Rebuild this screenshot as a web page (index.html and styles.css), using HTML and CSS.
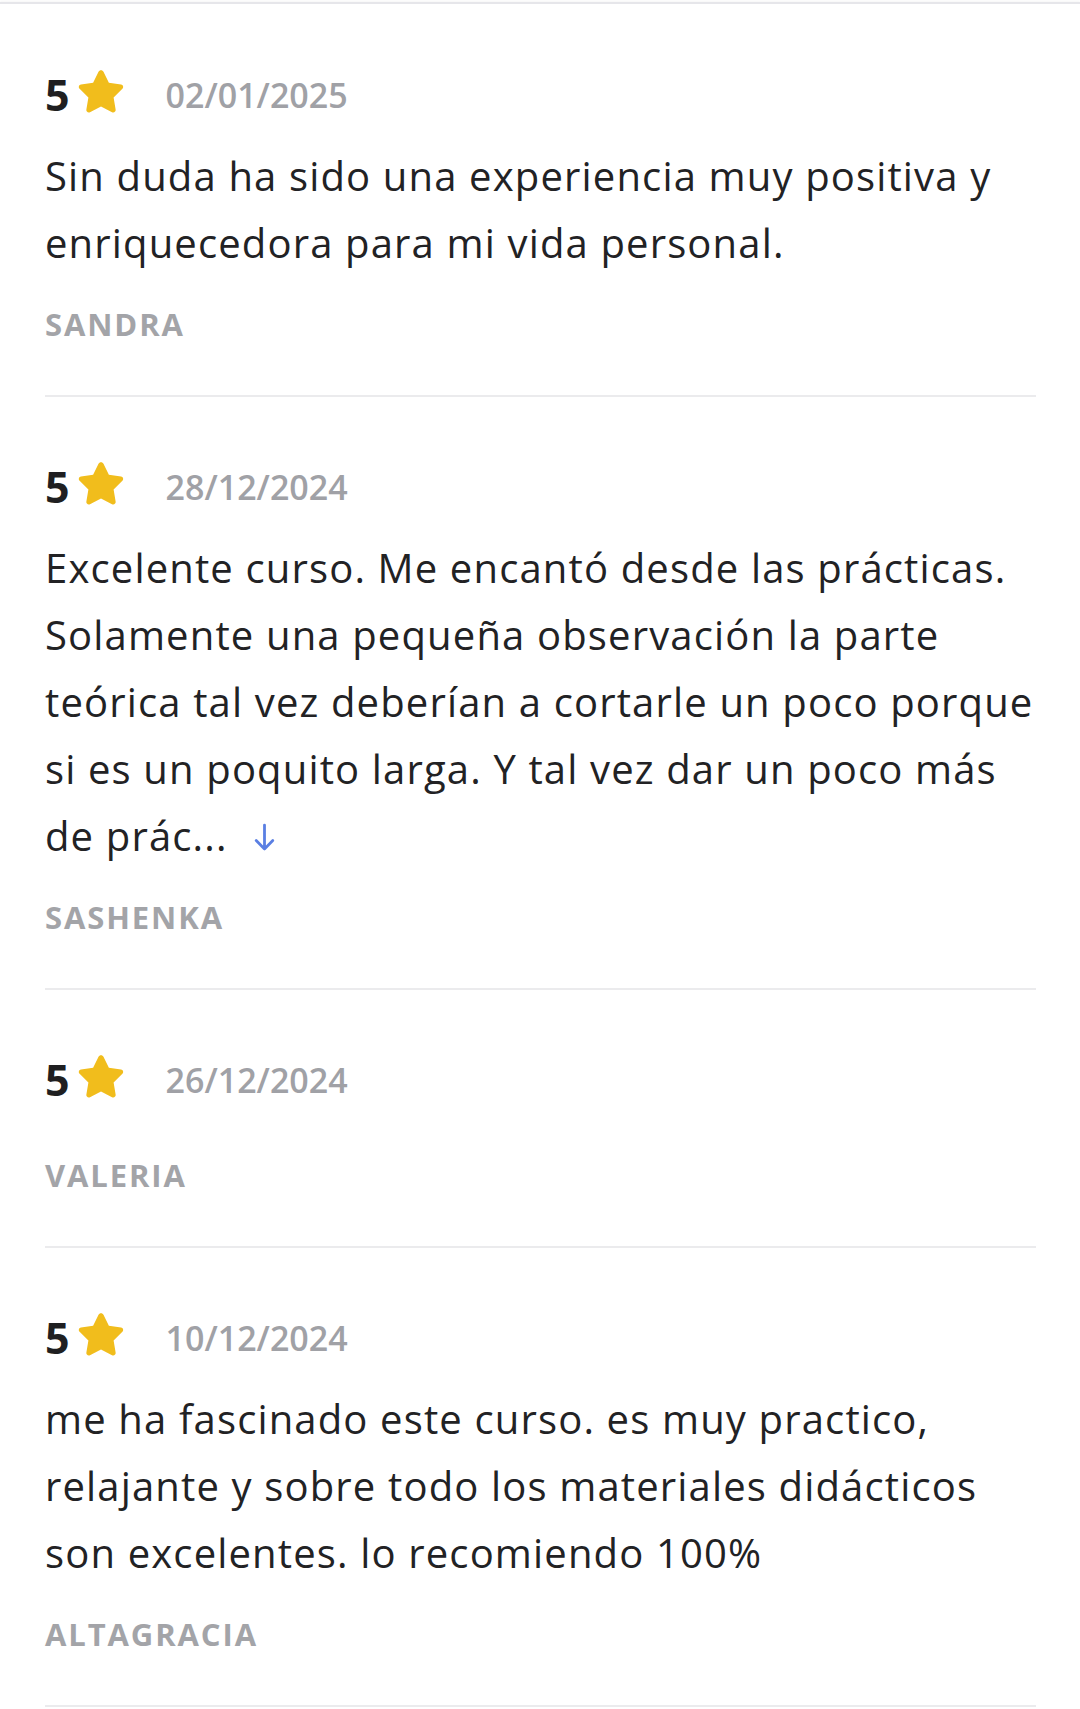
FILE: index.html
```html
<!DOCTYPE html>
<html lang="es">
<head>
<meta charset="utf-8">
<title>Opiniones</title>
<link rel="stylesheet" href="styles.css">
</head>
<body>
<div class="reviews">
  <div class="review">
    <div class="rating">
      <span class="score">5</span>
      <svg class="star" viewBox="0 0 24 24"><path d="M12 2.3c.5 0 .9.3 1.1.7l2.4 4.9 5.4.8c.9.1 1.3 1.2.6 1.9l-3.9 3.8.9 5.4c.2.9-.8 1.6-1.6 1.2L12 18.4 7.1 21c-.8.4-1.8-.3-1.6-1.2l.9-5.4-3.9-3.8c-.7-.7-.3-1.8.6-1.9l5.4-.8L10.9 3c.2-.4.6-.7 1.1-.7z"/></svg>
      <span class="date">02/01/2025</span>
    </div>
    <p class="text">Sin duda ha sido una experiencia muy positiva y enriquecedora para mi vida personal.</p>
    <div class="name">SANDRA</div>
  </div>
  <div class="review">
    <div class="rating">
      <span class="score">5</span>
      <svg class="star" viewBox="0 0 24 24"><path d="M12 2.3c.5 0 .9.3 1.1.7l2.4 4.9 5.4.8c.9.1 1.3 1.2.6 1.9l-3.9 3.8.9 5.4c.2.9-.8 1.6-1.6 1.2L12 18.4 7.1 21c-.8.4-1.8-.3-1.6-1.2l.9-5.4-3.9-3.8c-.7-.7-.3-1.8.6-1.9l5.4-.8L10.9 3c.2-.4.6-.7 1.1-.7z"/></svg>
      <span class="date">28/12/2024</span>
    </div>
    <p class="text">Excelente curso. Me encantó desde las prácticas. Solamente una pequeña observación la parte teórica tal vez deberían a cortarle un poco porque si es un poquito larga. Y tal vez dar un poco más de prác...<svg class="more" viewBox="0 0 20 28"><path d="M10 2v23M2 17l8 8 8-8"/></svg></p>
    <div class="name">SASHENKA</div>
  </div>
  <div class="review">
    <div class="rating">
      <span class="score">5</span>
      <svg class="star" viewBox="0 0 24 24"><path d="M12 2.3c.5 0 .9.3 1.1.7l2.4 4.9 5.4.8c.9.1 1.3 1.2.6 1.9l-3.9 3.8.9 5.4c.2.9-.8 1.6-1.6 1.2L12 18.4 7.1 21c-.8.4-1.8-.3-1.6-1.2l.9-5.4-3.9-3.8c-.7-.7-.3-1.8.6-1.9l5.4-.8L10.9 3c.2-.4.6-.7 1.1-.7z"/></svg>
      <span class="date">26/12/2024</span>
    </div>
    <div class="name">VALERIA</div>
  </div>
  <div class="review">
    <div class="rating">
      <span class="score">5</span>
      <svg class="star" viewBox="0 0 24 24"><path d="M12 2.3c.5 0 .9.3 1.1.7l2.4 4.9 5.4.8c.9.1 1.3 1.2.6 1.9l-3.9 3.8.9 5.4c.2.9-.8 1.6-1.6 1.2L12 18.4 7.1 21c-.8.4-1.8-.3-1.6-1.2l.9-5.4-3.9-3.8c-.7-.7-.3-1.8.6-1.9l5.4-.8L10.9 3c.2-.4.6-.7 1.1-.7z"/></svg>
      <span class="date">10/12/2024</span>
    </div>
    <p class="text">me ha fascinado este curso. es muy practico, relajante y sobre todo los materiales didácticos son excelentes. lo recomiendo 100%</p>
    <div class="name">ALTAGRACIA</div>
  </div>
</div>
</body>
</html>
```

FILE: styles.css
```css
html, body {
  margin: 0;
  padding: 0;
  background: #ffffff;
}

body {
  font-family: "Open Sans", "Noto Sans", "Liberation Sans", sans-serif;
  color: #202124;
}

.reviews {
  margin-top: 2px;
  border-top: 2px solid #e6e6ea;
  box-shadow: 0 -1px 2px rgba(0, 0, 0, 0.04);
  padding: 0 44px 0 45px;
}

.review {
  display: flex;
  flex-direction: column;
  padding: 67px 0 51px;
  border-bottom: 2px solid #ebebed;
}

.review:nth-child(2), .review:nth-child(3), .review:nth-child(4) {
  padding-top: 66px;
}

.rating {
  display: flex;
  align-items: center;
  height: 48px;
  margin-bottom: 23px;
}

.score {
  font-size: 43px;
  font-weight: 700;
  color: #1f1f21;
  line-height: 48px;
}

.star {
  width: 54px;
  height: 54px;
  margin-left: 4px;
  margin-top: -6px;
  fill: #f1bd1c;
}

.date {
  margin-left: 38px;
  font-size: 34px;
  font-weight: 600;
  color: #a0a1a6;
  line-height: 48px;
}

.text {
  margin: 0 -14px 0 0;
  font-size: 40px;
  line-height: 67px;
  letter-spacing: 1.15px;
  color: #222224;
}

.more {
  width: 21px;
  height: 29px;
  margin-left: 26px;
  vertical-align: -1px;
  fill: none;
  stroke: #5a7fe3;
  stroke-width: 2.7;
  stroke-linecap: round;
  stroke-linejoin: round;
}

.name {
  margin-top: 28px;
  font-size: 31px;
  font-weight: 700;
  line-height: 40px;
  letter-spacing: 1.9px;
  color: #a3a4a8;
}
```
